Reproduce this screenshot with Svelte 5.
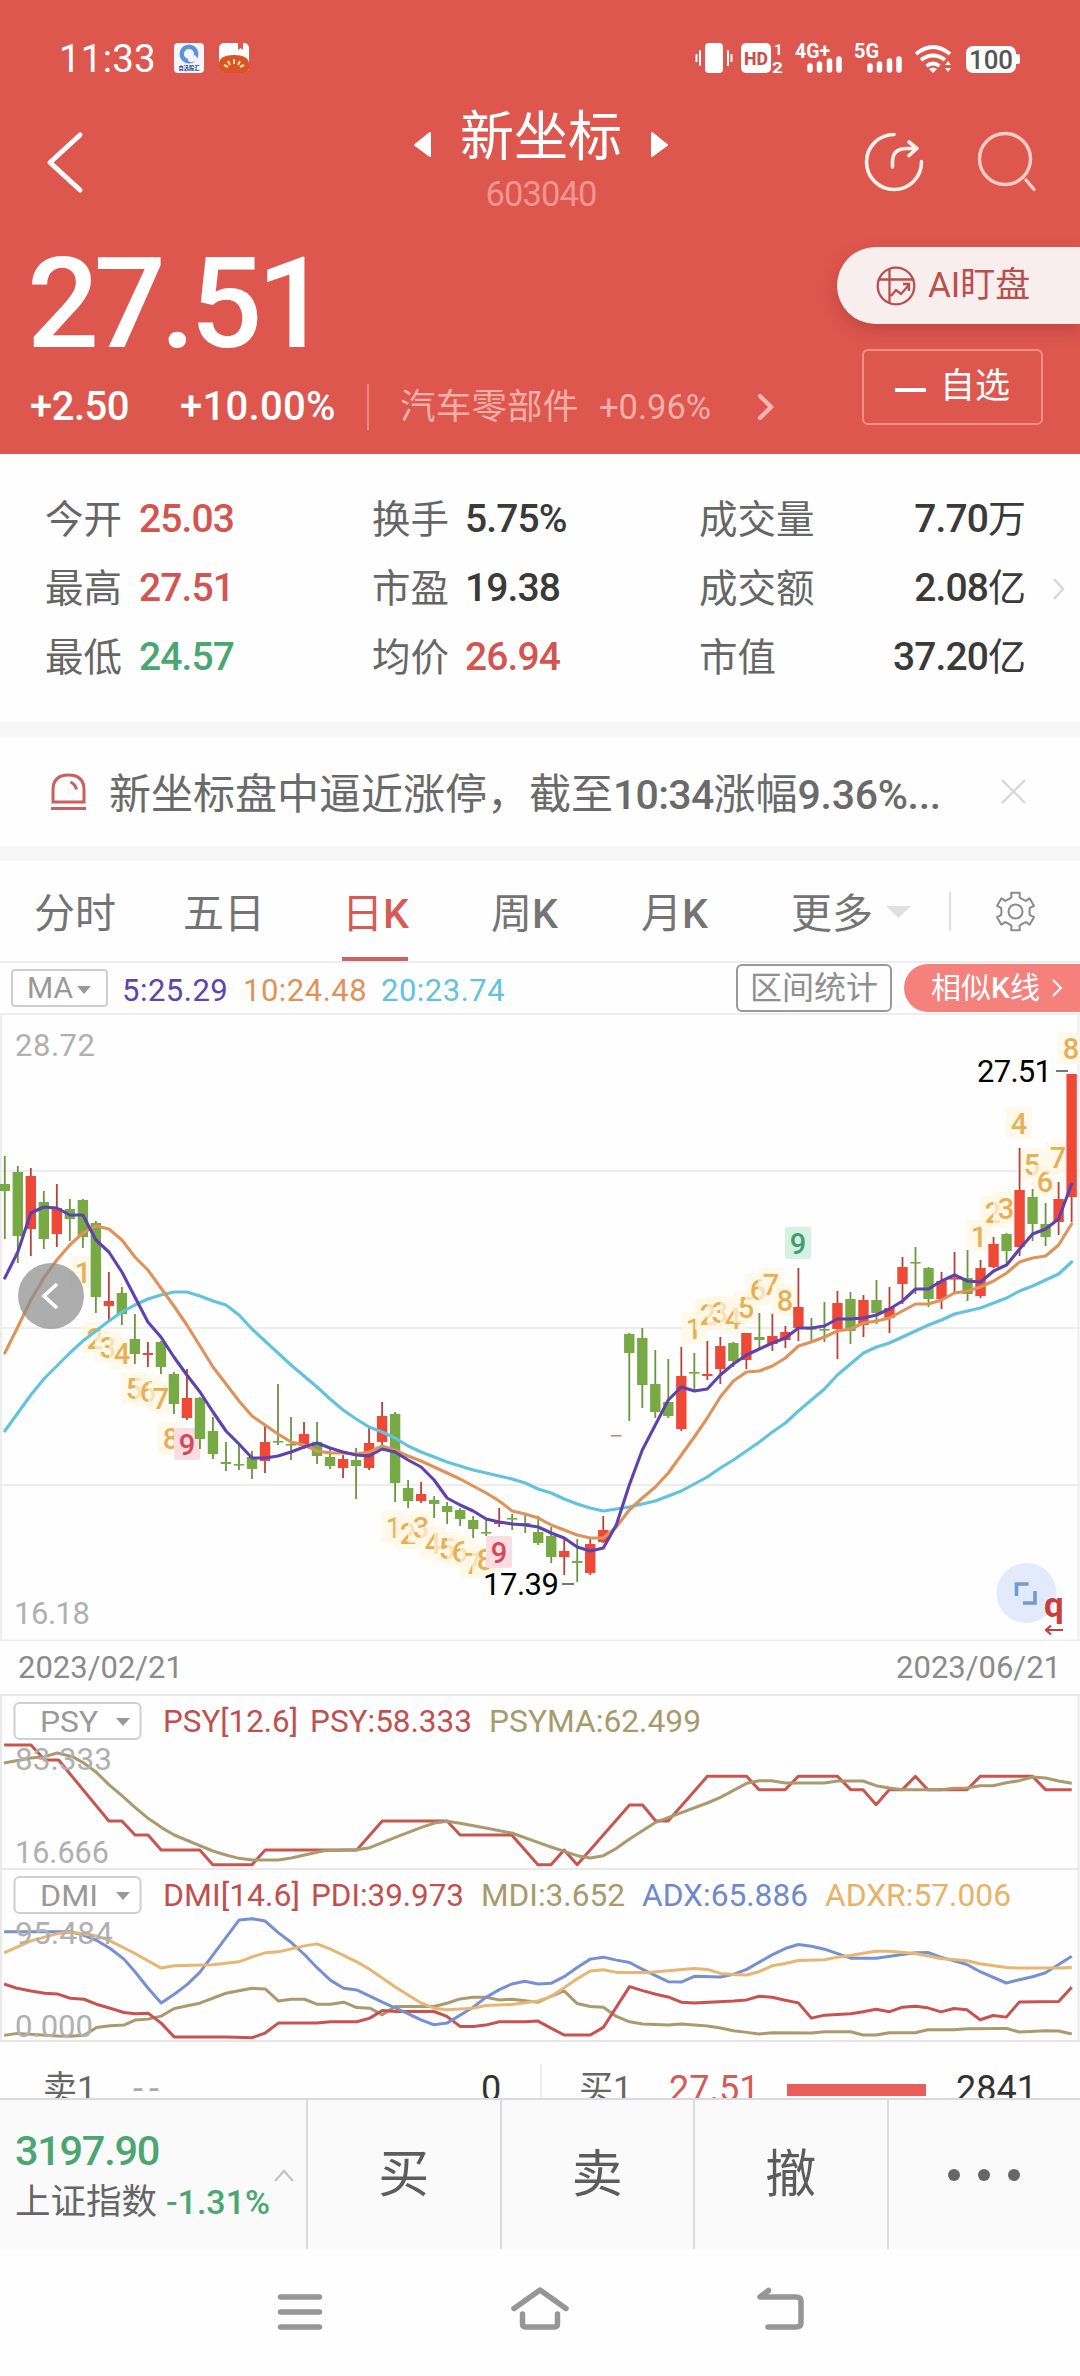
<script>
  // Candles: [direction, high, body top, body bottom, low] in chart units
  const candles = [
    ['g',1156,1184,1191,1239],['g',1166,1172,1236,1263],['r',1168,1176,1229,1256],['g',1191,1202,1239,1249],
    ['r',1184,1208,1234,1247],['g',1199,1209,1219,1241],['g',1199,1200,1237,1248],['g',1221,1223,1297,1313],
    ['r',1272,1301,1306,1320],['g',1287,1293,1314,1325],['g',1314,1339,1354,1364],['r',1342,1353,1355,1367],
    ['g',1341,1342,1367,1374],['g',1372,1374,1404,1414],['r',1369,1398,1418,1420],['g',1397,1398,1439,1449],
    ['g',1417,1431,1454,1459],['g',1442,1462,1464,1471],['g',1443,1464,1465,1470],['g',1451,1457,1469,1479],
    ['r',1426,1442,1461,1473],['g',1384,1441,1442,1445],['g',1417,1444,1445,1460],['r',1422,1434,1446,1449],
    ['g',1422,1442,1456,1464],['g',1447,1457,1466,1469],['r',1455,1459,1468,1478],['g',1448,1460,1466,1499],
    ['r',1428,1443,1468,1470],['r',1402,1416,1442,1447],['g',1412,1414,1483,1502],['g',1480,1488,1501,1508],
    ['r',1482,1494,1501,1503],['g',1496,1500,1504,1518],['g',1502,1506,1512,1524],['g',1508,1510,1519,1526],
    ['g',1516,1520,1529,1538],['g',1519,1532,1533,1536],['r',1508,1522,1524,1527],['g',1514,1518,1519,1530],
    ['g',1514,1523,1524,1533],['g',1516,1532,1543,1545],['g',1527,1536,1557,1563],['r',1538,1551,1557,1575],
    ['g',1539,1561,1563,1582],['r',1538,1544,1573,1575],['r',1516,1530,1542,1543],['n',1435,1435,1436,1436],
    ['g',1333,1334,1353,1421],['g',1328,1338,1385,1408],['g',1350,1384,1412,1418],['g',1359,1402,1416,1418],
    ['r',1347,1376,1429,1431],['g',1353,1372,1373,1390],['r',1341,1374,1376,1380],['r',1337,1346,1369,1384],
    ['g',1342,1343,1361,1367],['r',1333,1333,1360,1369],['g',1313,1337,1340,1348],['r',1314,1336,1344,1351],
    ['r',1326,1332,1340,1348],['r',1268,1307,1328,1341],['g',1318,1328,1329,1341],['g',1302,1329,1330,1342],
    ['r',1291,1303,1329,1359],['g',1292,1299,1331,1344],['r',1295,1300,1325,1337],['g',1280,1300,1313,1324],
    ['r',1287,1308,1318,1333],['r',1257,1267,1284,1304],['g',1247,1262,1263,1294],['g',1267,1268,1299,1307],
    ['r',1272,1281,1299,1309],['r',1252,1278,1279,1292],['g',1250,1278,1294,1301],['r',1260,1268,1296,1298],
    ['r',1237,1244,1267,1268],['g',1233,1234,1251,1263],['r',1148,1190,1247,1256],['g',1189,1197,1224,1241],
    ['g',1203,1224,1237,1246],['r',1182,1199,1222,1235],['r',1074,1074,1197,1222]
  ];
  const ma5 = [1278,1252,1213,1207,1208,1215,1215,1240,1252,1272,1297,1322,1337,1357,1375,1392,1412,1431,1444,1458,1458,1456,1452,1447,1443,1448,1452,1455,1456,1449,1452,1460,1467,1480,1498,1505,1511,1519,1522,1524,1525,1527,1533,1538,1547,1551,1548,1525,1485,1450,1425,1400,1387,1391,1389,1375,1364,1355,1349,1343,1338,1328,1328,1326,1319,1319,1318,1315,1309,1301,1289,1289,1281,1275,1281,1282,1271,1265,1249,1234,1229,1219,1184];
  const ma10 = [1353,1327,1300,1278,1260,1245,1233,1226,1229,1240,1257,1270,1288,1306,1325,1346,1367,1384,1401,1416,1425,1434,1442,1445,1451,1453,1453,1454,1452,1446,1450,1456,1461,1467,1473,1479,1486,1493,1501,1511,1514,1518,1525,1530,1535,1538,1538,1527,1510,1498,1487,1473,1455,1437,1418,1397,1381,1372,1371,1366,1358,1346,1342,1337,1331,1329,1323,1321,1318,1311,1304,1304,1300,1293,1291,1287,1281,1273,1262,1258,1256,1245,1224];
  const ma20 = [1431,1413,1395,1379,1366,1353,1341,1331,1321,1312,1305,1299,1295,1292,1292,1296,1301,1305,1315,1329,1341,1353,1365,1376,1387,1399,1410,1419,1427,1432,1438,1446,1452,1457,1462,1466,1470,1473,1476,1479,1483,1489,1493,1499,1504,1508,1511,1509,1507,1504,1501,1496,1491,1484,1477,1468,1460,1451,1442,1432,1423,1411,1400,1389,1375,1364,1353,1347,1343,1337,1331,1325,1320,1314,1311,1308,1303,1298,1291,1286,1280,1274,1262];
  // Sequence counters: [digit, x, y, tone]
  const marks = [
    [1,83,1272],[2,95,1338],[3,108,1347],[4,122,1353],[5,134,1388],[6,148,1391],[7,161,1398],[8,171,1438],[9,187,1444,'p'],
    [1,394,1527],[2,408,1533],[3,421,1527],[4,433,1543],[5,447,1548],[6,460,1551],[7,473,1563],[8,485,1559],[9,499,1552,'p'],
    [1,694,1328],[2,708,1314],[3,720,1312],[4,733,1318],[5,746,1307],[6,758,1289],[7,771,1284],[8,785,1300],[9,798,1243,'e'],
    [1,979,1236],[2,993,1212],[3,1006,1208],[4,1019,1123],[5,1032,1164],[6,1045,1181],[7,1058,1157],[8,1071,1048]
  ];
  const cx = (i) => 4.8 + 13.01 * i;
  const path = (a) => a.map((y, i) => `${cx(i).toFixed(1)},${y}`).join(' ');

  // Six-toothed gear outline: [angle offset in degrees, radius] per tooth
  const tooth = [[-25, 14.2], [-16, 14.8], [-13, 19.3], [13, 19.3], [16, 14.8], [25, 14.2]];
  const gear = [0, 1, 2, 3, 4, 5].flatMap((k) => tooth.map(([a, r]) => {
    const t = ((k * 60 - 90 + a) * Math.PI) / 180;
    return `${(1015.5 + r * Math.cos(t)).toFixed(1)},${(910.5 + r * Math.sin(t)).toFixed(1)}`;
  })).join(' ');

  const psy = '6,168 45,168 65,213 85,213 158,396 177,396 196,438 215,438 234,483 290,483 309,527 366,527 385,483 518,483 555,396 649,396 668,438 743,438 781,527 800,527 819,483 838,527 914,348 933,348 952,396 970,396 1027,262 1084,262 1102,302 1140,302 1159,262 1216,262 1235,302 1253,302 1272,347 1291,302 1310,302 1329,262 1347,302 1404,302 1423,262 1499,262 1518,302 1556,302';
  const psyma = '6,222 45,207 65,203 83,192 105,203 120,220 140,250 158,287 177,320 196,355 215,388 234,415 253,438 290,470 309,486 328,498 347,508 366,513 404,513 423,507 442,498 470,485 518,482 537,476 574,445 612,415 631,402 649,397 668,403 705,417 743,432 781,460 800,474 838,500 857,507 876,500 895,478 914,450 952,400 970,386 1027,342 1046,325 1084,283 1102,275 1120,275 1140,282 1197,282 1216,276 1253,276 1272,290 1291,297 1310,302 1366,302 1385,298 1404,297 1423,290 1442,290 1461,281 1480,275 1499,264 1518,267 1537,276 1556,283';
  const pdi = '6,887 25,900 45,908 65,915 83,917 102,930 122,933 140,948 160,960 180,973 196,977 215,975 234,1005 253,1047 328,1047 366,1049 385,1035 404,1005 460,1005 480,1001 518,1001 537,990 555,967 574,970 630,970 649,985 668,1015 687,1015 705,1011 725,1001 762,1001 781,999 800,1020 819,1041 857,1041 876,1018 914,895 933,907 952,918 970,926 989,942 1008,944 1065,938 1084,935 1102,924 1121,927 1140,936 1159,944 1178,990 1197,981 1235,977 1253,971 1272,963 1291,971 1310,957 1329,954 1347,959 1366,971 1385,961 1404,965 1423,995 1442,982 1461,987 1480,941 1537,940 1556,897';
  const mdi = '6,1042 25,1036 83,1044 102,1045 122,1042 140,1018 160,1013 180,1011 196,996 215,993 234,984 253,961 290,945 328,915 366,900 385,902 404,938 423,933 442,933 460,948 480,948 499,942 518,958 537,960 555,980 574,955 630,955 649,945 668,932 687,927 705,927 725,935 743,933 781,942 800,924 819,908 838,946 857,955 876,957 895,985 914,1001 933,1008 970,1011 989,1008 1027,1014 1046,1020 1065,1028 1084,1033 1102,1038 1121,1034 1178,1035 1197,1031 1235,1031 1253,1041 1272,1041 1291,1034 1329,1034 1347,1025 1385,1025 1404,1022 1461,1021 1480,1032 1518,1028 1537,1029 1556,1038';
  const adx = '6,729 102,729 122,740 140,755 160,780 180,812 196,850 215,900 234,944 253,918 272,888 290,852 309,800 328,747 347,694 366,690 385,697 404,732 423,762 442,798 460,837 480,876 499,900 518,905 555,942 593,977 612,996 630,1010 649,1005 687,957 705,928 725,904 743,887 762,879 781,887 800,885 819,865 838,837 857,812 876,806 895,815 914,822 933,843 970,880 989,881 1008,864 1046,866 1065,858 1084,843 1121,799 1140,780 1159,768 1178,773 1197,782 1235,809 1272,809 1310,798 1329,793 1347,792 1366,806 1404,828 1423,850 1461,884 1480,874 1499,865 1518,853 1556,803';
  const adxr = '6,793 45,757 83,735 105,731 140,742 160,757 196,795 234,839 253,832 309,829 347,820 366,805 385,793 404,790 442,772 460,766 480,782 518,820 537,843 574,896 593,921 612,945 630,960 649,965 687,960 705,952 743,949 781,938 800,925 819,898 838,871 857,848 876,844 895,852 940,852 1008,840 1027,843 1046,855 1065,858 1084,860 1102,850 1121,832 1140,825 1159,816 1197,814 1216,806 1235,801 1253,794 1272,788 1291,788 1329,795 1366,810 1404,817 1423,826 1461,837 1480,839 1537,839 1556,837';

  const panels = [
    {
      name: 'PSY', h: 174, y0: 15, vh: 522, hi: '83.333', hiW: 97, hiY: 76, lo: '16.666', loW: 94, loY: 169,
      legend: [['PSY[12.6]',163,135,'#c0504d'],['PSY:58.333',310,162,'#c0504d'],['PSYMA:62.499',489,212,'#a99a6c']],
      lines: [[psy,'#c8564f'],[psyma,'#aa9a6d']]
    },
    {
      name: 'DMI', h: 172, y0: 537, vh: 519, hi: '95.484', hiW: 98, hiY: 76, lo: '0.000', loW: 78, loY: 169,
      legend: [['DMI[14.6]',163,137,'#c0504d'],['PDI:39.973',311,153,'#c0504d'],['MDI:3.652',481,144,'#a99a6c'],['ADX:65.886',642,166,'#7089cb'],['ADXR:57.006',825,186,'#e8b268']],
      lines: [[mdi,'#aa9a6d'],[pdi,'#c8524f'],[adx,'#7790cf'],[adxr,'#e6b674']]
    }
  ];

  const stats = [
    ['今开','25.03','up','换手','5.75%','','成交量','7.70万'],
    ['最高','27.51','up','市盈','19.38','','成交额','2.08亿'],
    ['最低','24.57','down','均价','26.94','up','市值','37.20亿']
  ];
</script>

<div class="screen">
  <header>
    <div class="status">
      <span class="time">11:33</span>
      <svg class="apps" width="76" height="30" viewBox="0 0 76 30">
        <rect width="30" height="30" rx="4" fill="#f4f6ff" />
        <circle cx="15" cy="11" r="7.300" fill="none" stroke="#5c93dc" stroke-width="4.400" />
        <path d="M14 18 q5 3 10-2 l-3-4 q-3 4-7 3z" fill="#f4f6ff" />
        <text x="4.500" y="27" font-size="5.500" font-weight="700" fill="#2d477f" textLength="21" lengthAdjust="spacingAndGlyphs">自选股汇</text>
        <rect x="45" width="30" height="30" rx="5" fill="#fff" />
        <path d="M64 0h5v7l-2.500-2-2.500 2z" fill="#dd574f" />
        <path d="M45 20q1-8 15-8t15 8v5q0 5-5 5h-20q-5 0-5-5z" fill="#dc5327" />
        <path d="M60 16v5M54 18l2 4M66 18l-2 4M50 22l4 2M70 22l-4 2" stroke="#ffe3a0" stroke-width="2" />
      </svg>
      <svg class="sys" width="326" height="36" viewBox="694 40 326 36" fill="#fff">
        <rect x="705" y="43" width="18" height="30" rx="4" />
        <path d="M700 50v16M696.500 54v8M728 50v16M731.500 54v8" stroke="#fff" stroke-width="2" />
        <rect x="741" y="43" width="30" height="30" rx="5" />
        <text x="744" y="64.500" font-size="18" font-weight="800" fill="#c9504a" textLength="24" lengthAdjust="spacingAndGlyphs">HD</text>
        <text x="774" y="54.500" font-size="15" font-weight="700">1</text>
        <text x="772" y="72.500" font-size="15" font-weight="700" textLength="11" lengthAdjust="spacingAndGlyphs">2</text>
        <text x="795" y="57.500" font-size="19.500" font-weight="700" textLength="35" lengthAdjust="spacingAndGlyphs">4G+</text>
        <path d="M810 66v4M819.500 64v6M829.500 61v9M839 59v11" stroke="#fff" stroke-width="5.500" stroke-linecap="round" />
        <text x="854" y="57.500" font-size="19.500" font-weight="700" textLength="25" lengthAdjust="spacingAndGlyphs">5G</text>
        <path d="M870 66v4M879.500 64v6M889.500 61v9M899 59v11" stroke="#fff" stroke-width="5.500" stroke-linecap="round" />
        <path d="M916 54q17-14 34 0M921 60q12-9 24 0M926.500 66q6.500-5 13 0" fill="none" stroke="#fff" stroke-width="3.800" />
        <path d="M929 69q4-3 8 0l-4 4zM945 65l3-4 3 4zM945 68l3 4 3-4z" />
        <rect x="966" y="46" width="50" height="27" rx="7" />
        <rect x="1014" y="54" width="6" height="10" rx="2" />
        <text x="969" y="69" font-size="25" font-weight="500" fill="#555" textLength="44" lengthAdjust="spacingAndGlyphs">100</text>
      </svg>
    </div>
    <div class="nav">
      <svg width="46" height="64" viewBox="42 130 46 64"><path d="M80 135L50 162.500L80 190" fill="none" stroke="#fff" stroke-width="5" stroke-linecap="round" stroke-linejoin="round" /></svg>
      <div class="names">
        <div class="title">
          <svg width="20" height="28"><path d="M17 2v23L2 14z" fill="#fff" stroke="#fff" stroke-width="2" stroke-linejoin="round" /></svg>
          <span>新坐标</span>
          <svg width="20" height="28"><path d="M3 2v23L18 14z" fill="#fff" stroke="#fff" stroke-width="2" stroke-linejoin="round" /></svg>
        </div>
        <div class="code">603040</div>
      </div>
      <svg width="176" height="64" viewBox="864 130 176 64" fill="none" stroke-linecap="round" stroke-linejoin="round">
        <path d="M894 134.500A27.500 27.500 0 1 0 921.500 161.500" stroke="#fff0e8" stroke-width="3.600" />
        <path d="M892.500 167v-5q0-13.500 14-13.500h10M909 142l8 6.500-8 7" stroke="#fff0e8" stroke-width="3.600" />
        <circle cx="1005" cy="159" r="25.500" stroke="#ffccc6" stroke-width="3.400" />
        <path d="M1026 180l8 9.500" stroke="#ffccc6" stroke-width="3.400" />
      </svg>
    </div>
    <div class="hero">
      <div class="quote">
        <div class="price">27.51</div>
        <div class="change">
          <b>+2.50</b><b class="pct">+10.00%</b><i></i>
          <span class="sector">汽车零部件</span><span class="spct">+0.96%</span>
          <svg width="18" height="28"><path d="M3 3l11 11L3 25" fill="none" stroke="#f4b3ad" stroke-width="4.400" stroke-linecap="round" /></svg>
        </div>
      </div>
      <div class="actions">
        <div class="ai">
          <svg width="40" height="40" viewBox="0 0 40 40" fill="none" stroke="#b9504b" stroke-width="2.300">
            <circle cx="20" cy="20" r="18.300" /><path d="M3 13.500h34M13.500 3v34M15 30l5-6 5 4 8-9M27 18h6v7" />
          </svg>
          <span>AI盯盘</span>
        </div>
        <div class="pick"><i></i><span>自选</span></div>
      </div>
    </div>
  </header>

  <section class="stats">
    {#each stats as s}
      <div class="srow">
        <span class="lab">{s[0]}</span><b class={s[2]}>{s[1]}</b>
        <span class="lab">{s[3]}</span><b class={s[5]}>{s[4]}</b>
        <span class="lab">{s[6]}</span><b class="right">{s[7].slice(0, -1)}<span>{s[7].slice(-1)}</span></b>
      </div>
    {/each}
    <svg class="more" width="16" height="26"><path d="M3 3l9 10-9 10" fill="none" stroke="#d8d8d8" stroke-width="2.500" /></svg>
  </section>

  <section class="alert">
    <svg width="40" height="40" viewBox="0 0 40 40" fill="none" stroke="#cc5f5c" stroke-width="3">
      <path d="M4 30V18Q4 3 19.500 3T35 18v12zM2 36.500h35" /><path d="M21.500 10q5 2.500 6 7.500" />
    </svg>
    <span>新坐标盘中逼近涨停，截至<em class="tm">10:34</em>涨幅<em class="pc">9.36%...</em></span>
    <svg width="28" height="28"><path d="M2 2l23 23M25 2L2 25" stroke="#d6d6d6" stroke-width="2.200" /></svg>
  </section>

  <nav class="tabs">
    <span>分时</span><span>五日</span><span class="on">日<b>K</b></span><span>周<b>K</b></span><span>月<b>K</b></span><span>更多</span>
    <svg width="180" height="50" viewBox="880 885 180 50">
      <path d="M886 905h25l-12.500 12z" fill="#e0e0e0" />
      <path d="M950 891v39" stroke="#dedede" stroke-width="2" />
      <g fill="none" stroke="#8b8b8b" stroke-width="2" stroke-linejoin="round">
        <polygon points={gear} />
        <circle cx="1015.500" cy="910.500" r="7" />
      </g>
    </svg>
  </nav>

  <div class="mabar">
    <span class="ma">MA<svg width="16" height="10"><path d="M1 1h14L8 9z" fill="#999" /></svg></span>
    <span class="m5">5:25.29</span><span class="m10">10:24.48</span><span class="m20">20:23.74</span>
    <span class="range">区间统计</span>
    <span class="similar"><span>相似<b>K</b>线</span><svg width="14" height="20"><path d="M2 2l8 8-8 8" fill="none" stroke="#fff" stroke-width="2" /></svg></span>
  </div>

  <svg class="kline" width="1080" height="628" viewBox="0 1013 1080 628">
    <path d="M0 1014h1080M0 1171h1080M0 1328h1080M0 1485h1080M0 1640.500h1080M1 1013v628M1078.500 1013v628" stroke="#ededed" stroke-width="2" />
    {#each marks as [n, x, y, tone]}
      <rect x={x - 13} y={y - 16} width="26" height="32" rx="2" class={'box ' + (tone ?? 'o')} />
      <text x={x} y={y + 11} class={'num ' + (tone ?? 'o')}>{n}</text>
    {/each}
    {#each candles as [d, hi, top, bot, lo], i}
      <rect class={'wick ' + d} x={cx(i) - 0.9} y={hi} width="1.800" height={lo - hi} />
      <rect class={'body ' + d} x={cx(i) - 5.2} y={top} width="10.400" height={Math.max(bot - top, 1.6)} />
    {/each}
    <g fill="none" stroke-width="3.100" stroke-linejoin="round" stroke-linecap="round">
      <polyline points={path(ma20)} stroke="#63c2dc" />
      <polyline points={path(ma10)} stroke="#de935a" />
      <polyline points={path(ma5)} stroke="#5e42ae" />
    </g>
    <text x="15" y="1056" class="axis" textLength="80">28.72</text>
    <text x="14" y="1624" class="axis" textLength="76">16.18</text>
    <text x="977" y="1082" class="peak" textLength="75">27.51</text>
    <text x="483" y="1595" class="peak" textLength="76">17.39</text>
    <path d="M1056 1071h12M562 1584h12" stroke="#777" stroke-width="2" />
    <circle cx="51" cy="1296" r="33" fill="#8a8a8a" fill-opacity=".7" />
    <path d="M57 1284l-13 12 13 12" fill="none" stroke="#fff" stroke-width="3.600" />
    <circle cx="1026.500" cy="1593" r="30" fill="#e2eafb" />
    <path d="M1016.500 1596v-12h12M1023 1603h12v-12" fill="none" stroke="#6f9ad2" stroke-width="3.600" />
    <text x="1044" y="1617" font-size="35" font-weight="700" fill="#c7403d">q</text>
    <path d="M1063 1630h-17M1051 1625.500l-5 4.500 5 4.500" fill="none" stroke="#c7403d" stroke-width="2.200" />
  </svg>

  <div class="dates"><span>2023/02/21</span><span>2023/06/21</span></div>

  {#each panels as p}
    <svg class="panel" width="1080" height={p.h} viewBox={`0 0 1080 ${p.h}`}>
      <path d={`M0 1h1080M1 0v${p.h}M1078.500 0v${p.h}`} stroke="#e9e9e9" stroke-width="2" />
      <rect x="14.500" y="9" width="126" height="36" rx="5" fill="#fff" stroke="#cfcfcf" stroke-width="2" />
      <text x="40" y="38" class="pname" textLength="58" lengthAdjust="spacingAndGlyphs">{p.name}</text>
      <path d="M116 24h14l-7 8z" fill="#999" />
      {#each p.legend as [t, x, w, c]}
        <text x={x} y="38" font-size="31" fill={c} textLength={w} lengthAdjust="spacingAndGlyphs">{t}</text>
      {/each}
      <svg width="1080" height={p.h} viewBox={`0 ${p.y0} 1568 ${p.vh}`} preserveAspectRatio="none">
        {#each p.lines as [pts, c]}
          <polyline points={pts} fill="none" stroke={c} stroke-width="3" stroke-linejoin="round" vector-effect="non-scaling-stroke" />
        {/each}
      </svg>
      <text x="15" y={p.hiY} class="axis" textLength={p.hiW} lengthAdjust="spacingAndGlyphs">{p.hi}</text>
      <text x="15" y={p.loY} class="axis" textLength={p.loW} lengthAdjust="spacingAndGlyphs">{p.lo}</text>
    </svg>
  {/each}

  <div class="book">
    <div class="side sell"><span class="lab">卖1</span><span class="dash">--</span><span class="vol">0</span></div>
    <div class="side buy"><span class="lab">买1</span><span class="bid">27.51</span><i></i><span class="vol">2841</span></div>
  </div>

  <footer>
    <div class="index">
      <div>
        <div class="ival">3197.90</div>
        <div class="iname">上证指数<b>-1.31%</b></div>
      </div>
      <svg width="20" height="14"><path d="M1 12l9-10 9 10" fill="none" stroke="#c4c4c4" stroke-width="2.200" /></svg>
    </div>
    <div class="act"><span>买</span></div>
    <div class="act"><span>卖</span></div>
    <div class="act"><span>撤</span></div>
    <div class="act"><svg width="80" height="14" fill="#666"><circle cx="10" cy="7" r="6" /><circle cx="40" cy="7" r="6" /><circle cx="70" cy="7" r="6" /></svg></div>
  </footer>

  <div class="system">
    <svg width="540" height="50" viewBox="270 2285 540 50" fill="none" stroke="#969696" stroke-width="5.500" stroke-linecap="round" stroke-linejoin="round">
      <path d="M280.500 2298h39M280.500 2313h39M280.500 2328h39" />
      <path d="M514 2309.500l26-18.500 26 18.500M522.500 2315v10q0 3 4 3h27q4 0 4-3v-10" />
      <path d="M768.500 2291.500l-8.500 6.500h36q5 0 5 4v22q0 4-5 4h-28" />
    </svg>
  </div>
</div>

<style>
  :global(body) { background: #fff; }
  .screen {
    width: 1080px; height: 2376px; display: flex; flex-direction: column; overflow: hidden;
    background: #fefefe; color: #666; font-family: Roboto, "Noto Sans CJK SC", sans-serif;
  }
  .screen > * { flex: none; }
  svg { display: block; flex: none; }
  em, i { font-style: normal; }
  b { font-weight: 500; }

  header { height: 454px; background: #dd574f; color: #fff; }
  .status { height: 100px; padding: 16px 60px 0 59px; box-sizing: border-box; display: flex; align-items: center; }
  .time { width: 115px; font-size: 38.5px; letter-spacing: 0.2px; }
  .apps { font-family: "Noto Sans CJK SC", sans-serif; }
  .sys { margin-left: auto; }
  .nav { height: 132px; padding: 0 40px 0 42px; display: flex; justify-content: space-between; align-items: flex-start; }
  .nav > svg { margin-top: 30px; }
  .names { margin: 8px 0 0 130px; }
  .title { display: flex; align-items: center; gap: 27px; height: 60px; line-height: 60px; font-size: 54px; }
  .title svg { margin-top: 14px; }
  .code { margin-top: 6px; line-height: 40px; font-size: 34.5px; text-align: center; color: #f0958f; letter-spacing: -0.9px; }

  .hero { display: flex; justify-content: space-between; }
  .quote { padding-left: 30px; }
  .price { height: 142px; line-height: 143px; font-size: 127px; font-weight: 500; letter-spacing: -5.5px; margin-left: -3px; }
  .change { margin-top: 13px; height: 40px; display: flex; align-items: center; font-size: 40px; line-height: 40px; letter-spacing: -0.5px; }
  .change b { width: 150px; }
  .change b.pct { width: 187px; letter-spacing: 0.3px; }
  .change i { width: 2px; height: 46px; background: #ea8780; margin-right: 31px; }
  .sector { width: 199px; font-size: 35.5px; letter-spacing: 0.2px; color: #f4aea8; }
  .spct { width: 158px; font-size: 34.5px; letter-spacing: 0; color: #f4aea8; }
  .actions { width: 243px; padding-top: 15px; }
  .ai {
    height: 77px; border-radius: 40px 0 0 40px; background: #f9eeee; box-shadow: 0 6px 16px rgba(120, 30, 20, .28);
    display: flex; align-items: center; gap: 12px; padding-left: 39px; box-sizing: border-box; color: #b9504b; font-size: 35px;
  }
  .ai span, .pick span { line-height: 40px; }
  .pick {
    width: 181px; height: 76px; margin: 25px 0 0 25px; box-sizing: border-box; border: 2px solid #f08e88; border-radius: 6px;
    display: flex; align-items: center; justify-content: center; gap: 14px; font-size: 35px;
  }
  .pick i { width: 31px; height: 4px; background: #fff; margin-top: 6px; }

  .stats { position: relative; padding-top: 31px; height: 237px; }
  .srow {
    height: 69px; line-height: 69px; display: grid; grid-template-columns: 94px 233px 93px 234px 150px 177px; padding-left: 45px; font-size: 38.5px;
  }
  .srow b { color: #3a3a3a; font-size: 39px; letter-spacing: -0.9px; }
  .srow b span { font-weight: 400; letter-spacing: 0; font-size: 38px; }
  .srow .right { text-align: right; }
  .srow .up { color: #d35550; }
  .srow .down { color: #4ca672; }
  .stats .more { position: absolute; right: 13px; top: 122px; }

  .alert {
    height: 109px; border-top: 15px solid #f7f7f7; border-bottom: 15px solid #f7f7f7; display: flex; align-items: center;
    padding-left: 49px; font-size: 42px; color: #6a6a6a;
  }
  .alert span { width: 891px; margin: 7px 0 0 20px; white-space: nowrap; line-height: 60px; }
  .alert .tm { font-size: 41px; font-weight: 500; letter-spacing: -0.7px; }
  .alert .pc { font-size: 41px; font-weight: 500; letter-spacing: -0.3px; }

  .tabs {
    height: 100px; display: grid; grid-template-columns: 149px 159px 149px 150px 150px 89px 180px; padding-left: 34px;
    align-items: center; font-size: 41px; color: #747474;
  }
  .tabs span { line-height: 98px; height: 99px; box-sizing: border-box; padding-top: 3px; white-space: nowrap; }
  .tabs .on { color: #d65a56; width: 66px; border-bottom: 4px solid #cb6360; }

  .mabar {
    height: 52px; box-sizing: border-box; border-top: 2px solid #ededed; display: flex; align-items: center; font-size: 31px; line-height: 36px;
  }
  .ma {
    width: 97px; height: 38px; box-sizing: border-box; border: 2px solid #cfcfcf; border-radius: 4px; margin: 0 14px 0 11px;
    display: flex; align-items: center; justify-content: center; gap: 3px; color: #999; font-size: 30px;
  }
  .ma svg { margin-top: 4px; }
  .m5, .m10, .m20 { margin-top: 5px; letter-spacing: 0.5px; }
  .m5 { width: 121px; color: #5c45ad; }
  .m10 { width: 138px; color: #de935a; }
  .m20 { width: 355px; color: #63c2dc; }
  .range {
    width: 156px; height: 48px; line-height: 44px; box-sizing: border-box; border: 2px solid #999; border-radius: 6px;
    text-align: center; color: #8f8f8f; font-size: 32px; margin-right: 12px;
  }
  .similar {
    flex: 1; height: 48px; border-radius: 24px 0 0 24px; background: #f4817c; color: #fff; font-size: 30px;
    display: flex; align-items: center; gap: 11px; padding-left: 27px; box-sizing: border-box;
  }

  svg text { font-family: Roboto, "Noto Sans CJK SC", sans-serif; }
  .axis { font-size: 31px; fill: #b0b0b0; }
  .peak { font-size: 31px; fill: #000; }
  .pname { font-size: 30px; fill: #999; }
  .num { font-size: 29px; font-weight: 500; text-anchor: middle; }
  .num.o { fill: #e6b056; }
  .num.p { fill: #d8465a; }
  .num.e { fill: #3f9f72; }
  .box.o { fill: #fff6e4; fill-opacity: .7; }
  .box.p { fill: #fadde1; }
  .box.e { fill: #d6f0e2; }
  .body.r { fill: #ee4836; }
  .body.g { fill: #77a944; }
  .body.n { fill: #b98888; }
  .wick.r { fill: #b8423a; }
  .wick.g { fill: #6a963f; }
  .wick.n { fill: none; }

  .dates { height: 53px; display: flex; justify-content: space-between; align-items: center; padding: 0 19px 0 18px; font-size: 31px; color: #8b8b8b; }
  .book { height: 58px; display: flex; overflow: hidden; border-top: 2px solid #e6e6e6; box-sizing: border-box; }
  .side { width: 540px; height: 80px; margin-top: 22px; box-sizing: border-box; display: flex; align-items: flex-start; line-height: 50px; font-size: 36px; }
  .side .lab { font-size: 34px; line-height: 48px; }
  .sell { padding-left: 43px; }
  .sell .lab, .buy .lab { width: 90px; }
  .dash { width: 348px; color: #aaa; letter-spacing: 6px; }
  .vol { color: #333; }
  .buy { padding-left: 37px; border-left: 2px solid #eee; }
  .bid { width: 118px; color: #d65a56; }
  .buy i { width: 139px; height: 12px; background: #e95d5b; margin: 20px 30px 0 0; }

  footer { height: 151px; box-sizing: border-box; border-top: 2px solid #d9dadb; background: #fafafa; display: flex; }
  .index { width: 306px; display: flex; align-items: center; justify-content: space-between; padding: 3px 12px 0 15px; box-sizing: border-box; }
  .ival { font-size: 41.5px; font-weight: 500; line-height: 52px; color: #4ca672; letter-spacing: -1.3px; }
  .iname { font-size: 35.5px; line-height: 50px; white-space: nowrap; }
  .iname b { font-size: 34px; color: #4ca672; margin-left: 9px; }
  .act { flex: 1; border-left: 2px solid #dadcde; display: flex; align-items: center; justify-content: center; font-size: 51px; color: #5c5c5c; }
  .act span { line-height: 60px; }
  .system { flex: 1; display: flex; justify-content: center; padding-top: 35px; background: #fefefe; }
</style>
